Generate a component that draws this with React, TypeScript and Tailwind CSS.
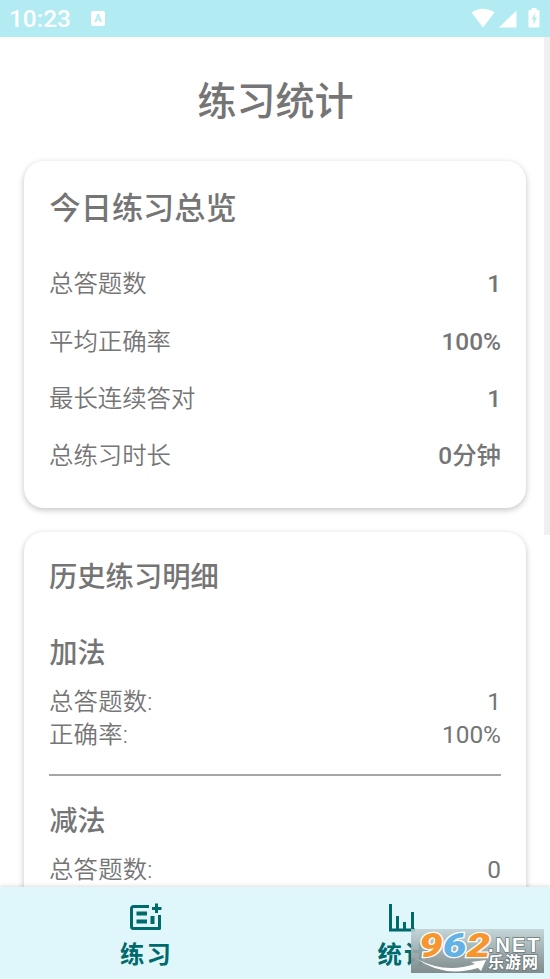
interface Stat {
  label: string;
  value: string;
}

interface Section {
  title: string;
  stats: Stat[];
}

const overview: Stat[] = [
  { label: '总答题数', value: '1' },
  { label: '平均正确率', value: '100%' },
  { label: '最长连续答对', value: '1' },
  { label: '总练习时长', value: '0分钟' },
];

const history: Section[] = [
  {
    title: '加法',
    stats: [
      { label: '总答题数:', value: '1' },
      { label: '正确率:', value: '100%' },
    ],
  },
  {
    title: '减法',
    stats: [{ label: '总答题数:', value: '0' }],
  },
];

function StatusBar() {
  return (
    <header className="flex h-[37px] shrink-0 items-center bg-[#b2ebf2] pl-[9px] text-white">
      <span className="w-[82px] pt-[2px] text-[24.4px] leading-none font-medium">10:23</span>
      <span className="flex h-[15px] w-[14px] items-center justify-center rounded-[2px] bg-white text-[11px] leading-none font-bold text-[#b2ebf2]">
        A
      </span>
      <svg className="ml-auto" width="80" height="37" viewBox="0 0 80 37" fill="currentColor">
        <path d="M1.500 12.500Q13 5 24.500 12.500L13 27.500Z" />
        <path d="M46.500 10.500V27.500H29Z" />
        <path d="M61.500 8h5v2h2a1 1 0 0 1 1 1v15.500a1 1 0 0 1-1 1h-9a1 1 0 0 1-1-1V11a1 1 0 0 1 1-1h2z" />
        <path d="M65.500 12.500L61.500 19.500h2v5.500l3.500-7.500h-2.500z" fill="#b2ebf2" />
      </svg>
    </header>
  );
}

function OverviewCard() {
  return (
    <section className="h-[347px] rounded-[20px] bg-white px-[25px] pt-[28px] shadow-[0_2px_6px_rgba(0,0,0,0.24)]">
      <h2 className="mb-[27px] pl-[0.5px] text-[31.2px] leading-[40px] font-medium">今日练习总览</h2>
      {overview.map((stat) => (
        <div key={stat.label} className="flex h-[57.2px] items-center justify-between text-[24.4px] leading-none">
          <span className="font-[350]">{stat.label}</span>
          <span className="font-medium">{stat.value}</span>
        </div>
      ))}
    </section>
  );
}

function HistoryCard() {
  return (
    <section className="mt-6 rounded-[20px] bg-white px-[25px] pt-[26px] shadow-[0_2px_6px_rgba(0,0,0,0.24)]">
      <h2 className="mb-[36px] text-[28.300px] leading-[40px] font-medium">历史练习明细</h2>
      {history.map((section) => (
        <div key={section.title} className="mb-[26px] border-b-2 border-[#a6a6a6] pb-[22px]">
          <h3 className="mb-[12px] pl-[0.5px] text-[28px] leading-[40px] font-medium">{section.title}</h3>
          {section.stats.map((stat) => (
            <div key={stat.label} className="flex h-[33px] items-center justify-between text-[24.4px] leading-none">
              <span className="font-[350] tracking-[0.2px]">{stat.label}</span>
              <span>{stat.value}</span>
            </div>
          ))}
        </div>
      ))}
    </section>
  );
}

function PracticeIcon() {
  return (
    <svg width="32" height="28" viewBox="0 0 32 28" fill="none" stroke="currentColor">
      <path d="M19 3.500H3.500a2 2 0 0 0-2 2v18a2 2 0 0 0 2 2h26V12" strokeWidth="3" strokeLinejoin="round" />
      <path d="M6.500 10.500H17M6.500 18.500H17M22.500 13v8" strokeWidth="4" />
      <path d="M26.500 0.500v9.500M22 5.500h9.500" strokeWidth="3" />
    </svg>
  );
}

function ChartIcon() {
  return (
    <svg width="28" height="28" viewBox="0 0 28 28" fill="none" stroke="currentColor" strokeWidth="3">
      <path d="M1.500 0V26H26" />
      <path d="M8.500 12V25M15.500 18V25M23.500 8V25" />
    </svg>
  );
}

function BottomNav() {
  return (
    <nav className="relative z-10 flex h-[92px] shrink-0 bg-[#dff7fa] text-[#00696c] shadow-[0_-1px_4px_rgba(0,0,0,0.14)]">
      <button className="flex w-[292px] flex-col items-center pt-[16px]">
        <PracticeIcon />
        <span className="mt-[11px] pl-[1px] text-[24.4px] leading-[26px] font-bold tracking-[2px]">练习</span>
      </button>
      <button className="flex w-[222px] flex-col items-center pt-[17px]">
        <ChartIcon />
        <span className="mt-[10px] pl-[2px] text-[24.4px] leading-[26px] font-bold tracking-[2px]">统计</span>
      </button>
    </nav>
  );
}

function SiteBadge() {
  return (
    <div className="absolute top-[929px] left-[411px] z-20 h-[44px] w-[133px] bg-linear-to-b from-[#bfd0d3]/85 to-[#7b8688]/95">
      <svg className="absolute top-[27px] left-[6px]" width="70" height="17" viewBox="0 0 70 17" fill="white">
        <path d="M0 3Q28 18 58 8L54 6L69 4L64 15L61 12Q27 22 0 3Z" />
      </svg>
      <span className="absolute top-[2px] left-[8px] origin-left scale-x-[1.24] font-[Roboto] text-[34px] leading-[28px] font-black italic text-[#f7962e] [paint-order:stroke] [-webkit-text-stroke:2.5px_white]">
        9<span className="text-[#62b2e6]">6</span>2
      </span>
      <span className="absolute top-[6px] left-[77px] font-['Liberation_Sans'] text-[20px] leading-[20px] font-bold tracking-[2px] text-white [paint-order:stroke] [-webkit-text-stroke:1.500px_#6b7779]">
        .NET
      </span>
      <span className="absolute top-[26px] left-[77px] text-[16px] leading-[16px] font-bold tracking-[1px] text-white [paint-order:stroke] [-webkit-text-stroke:1.500px_#6b7779]">
        乐游网
      </span>
    </div>
  );
}

export default function App() {
  return (
    <div className="relative flex h-[979px] w-[550px] flex-col overflow-hidden bg-white font-[Roboto,'Noto_Sans_CJK_SC',sans-serif] text-[#757575]">
      <StatusBar />
      <div className="flex min-h-0 flex-1 overflow-hidden">
        <main className="w-[544px] shrink-0 pr-[18px] pl-6">
          <h1 className="pt-[37px] pb-[31px] pl-[1px] text-center text-[39px] leading-[56px] font-medium">练习统计</h1>
          <OverviewCard />
          <HistoryCard />
        </main>
        <div className="h-[498px] w-[6px] bg-[#f0f0f0]" />
      </div>
      <BottomNav />
      <SiteBadge />
    </div>
  );
}
